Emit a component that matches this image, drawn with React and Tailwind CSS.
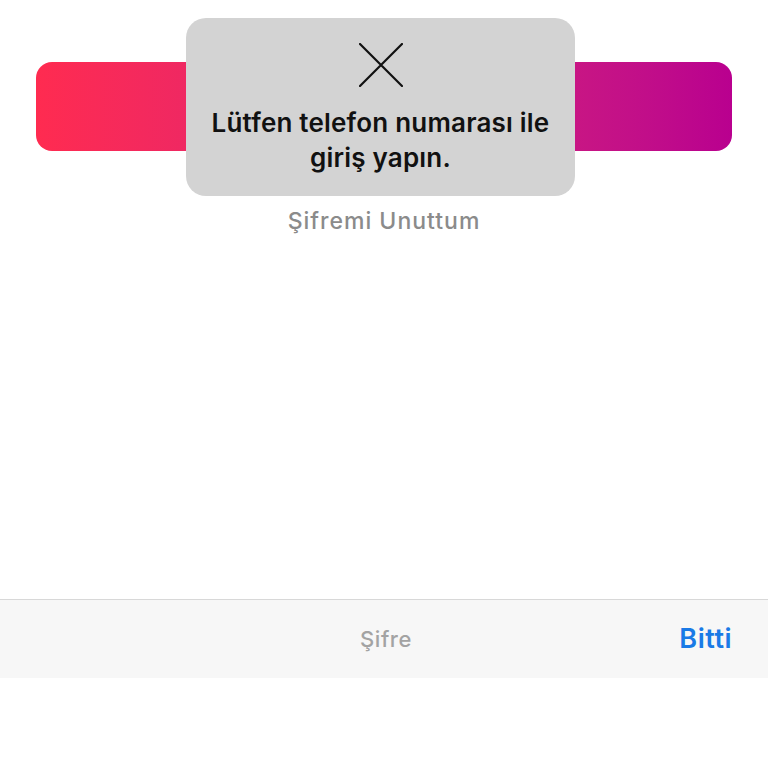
export default function App() {
  return (
    <div className="relative h-[768px] w-[768px] bg-white flex flex-col" style={{ fontFamily: "Inter, 'Noto Sans', sans-serif" }}>
      <div className="px-[36px] pt-[62px]">
        <button className="h-[89px] w-full rounded-[16px] bg-gradient-to-r from-[#ff2b50] to-[#b9008f]" />
      </div>
      <div className="mt-[49px] text-center text-[23px] font-medium leading-[30px] tracking-[1px] text-[#8b8b8b]">Şifremi Unuttum</div>
      <div className="flex-1" />
      <div className="mb-[90px] flex h-[79px] items-center justify-between border-t border-[#d8d8d8] bg-[#f7f7f7] px-[36px]">
        <span className="w-[60px]" />
        <span className="pl-[4px] text-[22px] font-medium tracking-[0.6px] text-[#a3a3a3]">Şifre</span>
        <span className="w-[60px] text-right text-[27px] font-semibold tracking-[0.5px] text-[#1a7ae6]">Bitti</span>
      </div>

      <div className="absolute left-[186px] top-[18px] flex h-[178px] w-[389px] flex-col items-center rounded-[20px] bg-[#d3d3d3] pt-[25px]">
        <svg width="44" height="44" viewBox="0 0 44 44" fill="none" stroke="#111" strokeWidth="2.2" strokeLinecap="round">
          <path d="M1 1L43 43M43 1L1 43" />
        </svg>
        <div className="mt-[18px] whitespace-nowrap text-center text-[26px] font-semibold leading-[35px] tracking-[0.2px] text-[#111]">
          Lütfen telefon numarası ile
          <br />
          giriş yapın.
        </div>
      </div>
    </div>
  );
}
